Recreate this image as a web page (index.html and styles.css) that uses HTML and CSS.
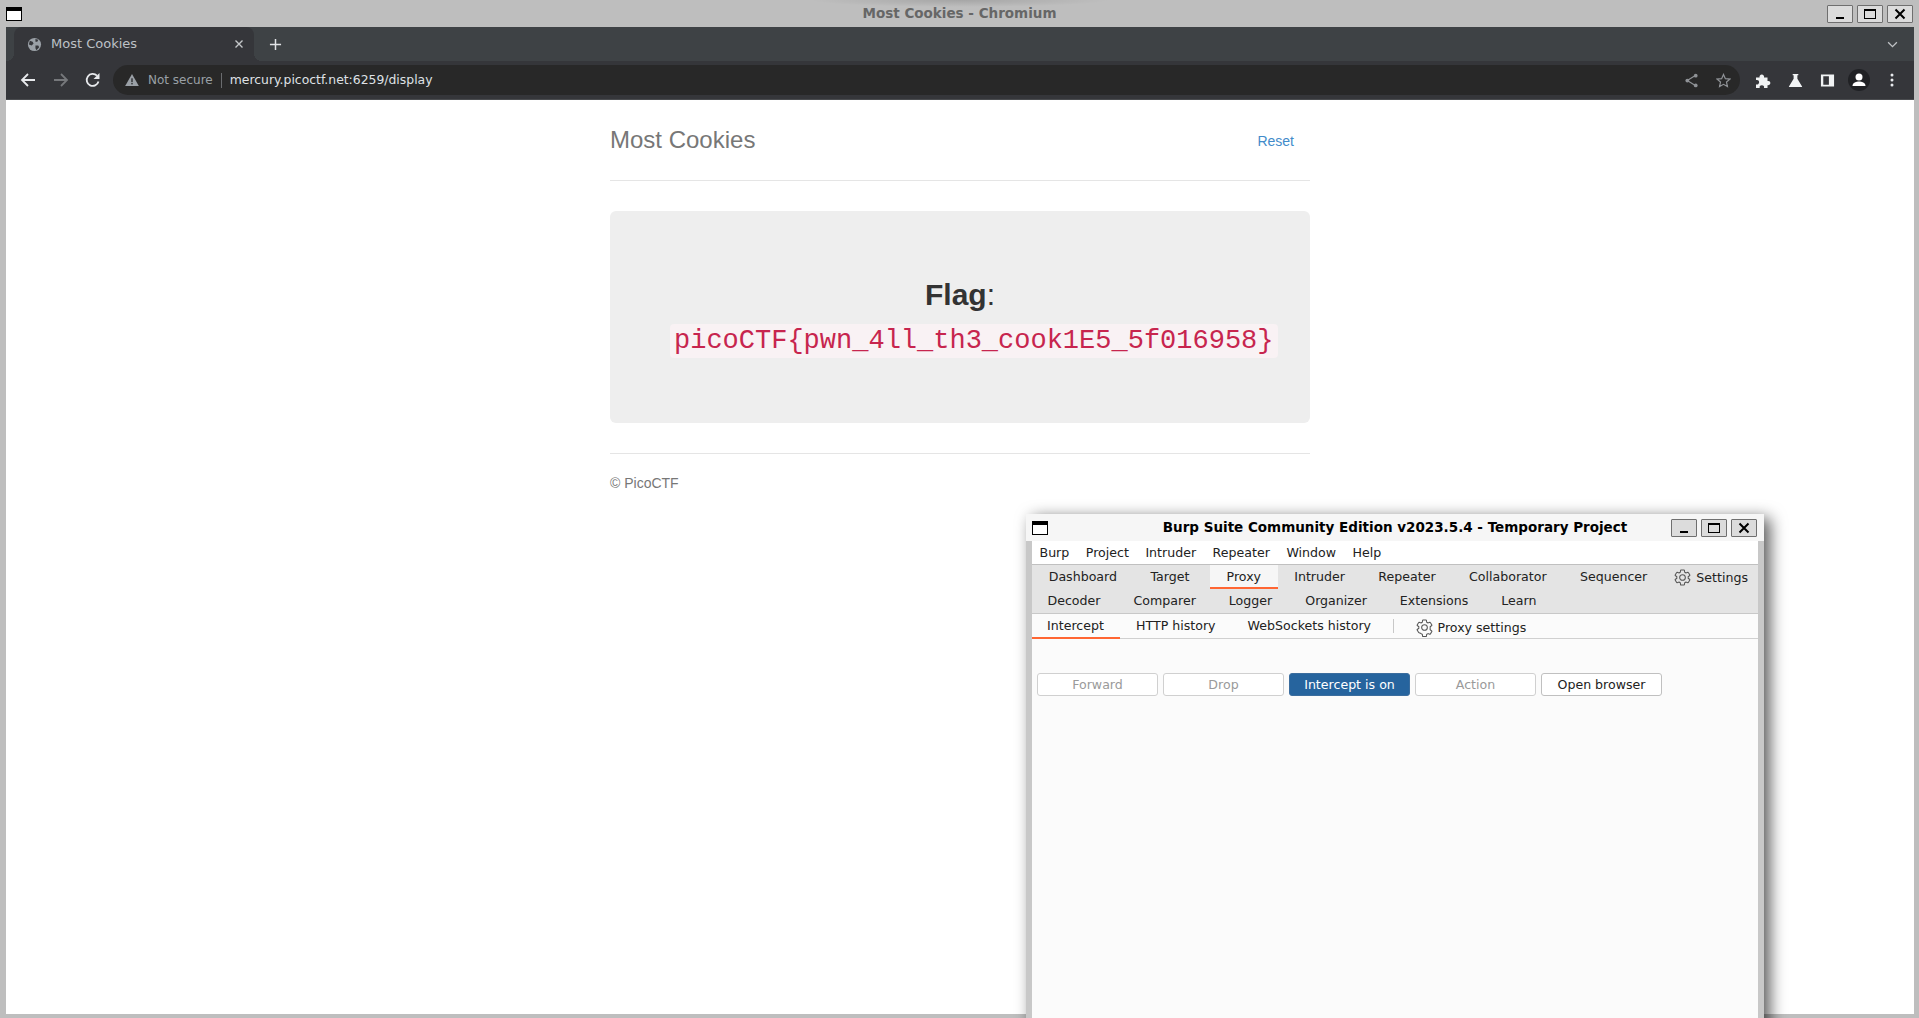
FILE: index.html
```html
<!DOCTYPE html>
<html lang="en">
<head>
<meta charset="utf-8">
<title>Most Cookies - Chromium</title>
<link rel="stylesheet" href="styles.css">
</head>
<body>
<div class="desktop">
  <header class="titlebar">
    <svg class="win-icon" viewBox="0 0 16 14"><rect x="0.5" y="0.5" width="15" height="13" fill="#fff" stroke="#000"/><rect x="0" y="0" width="16" height="4" fill="#000"/></svg>
    <div class="title-text">Most Cookies - Chromium</div>
    <div class="win-btns">
      <button class="wbtn"><svg viewBox="0 0 24 16"><rect x="8" y="11" width="8" height="2" fill="#000"/></svg></button>
      <button class="wbtn"><svg viewBox="0 0 24 16"><rect x="6.500" y="3.500" width="11" height="9" fill="none" stroke="#000"/><rect x="6" y="3" width="12" height="2" fill="#000"/></svg></button>
      <button class="wbtn"><svg viewBox="0 0 24 16"><path d="M7.500 3.500l9 9M16.500 3.500l-9 9" stroke="#000" stroke-width="2" fill="none"/></svg></button>
    </div>
  </header>
  <div class="browser">
    <div class="tabstrip">
      <div class="tab">
        <svg class="globe" viewBox="0 0 16 16"><circle cx="8" cy="8" r="7" fill="#9aa0a6"/><path d="M3 4l3 1 1 2-2 2-3-1zM9 2l3 1-1 2-2 0zM9 9l3 0 1 2-3 3-1-2z" fill="#35363a"/></svg>
        <span class="tab-label">Most Cookies</span>
        <svg class="tab-close" viewBox="0 0 10 10"><path d="M1.500 1.500l7 7M8.500 1.500l-7 7" stroke="#c4c7c9" stroke-width="1.400" fill="none"/></svg>
      </div>
      <svg class="newtab" viewBox="0 0 14 14"><path d="M7 1v12M1 7h12" stroke="#e1e3e6" stroke-width="1.600" fill="none"/></svg>
      <svg class="tab-chevron" viewBox="0 0 12 8"><path d="M1 1.500l5 5 5-5" stroke="#bfc2c5" stroke-width="1.500" fill="none"/></svg>
    </div>
    <div class="toolbar">
      <svg class="nav-ic back" viewBox="0 0 16 16"><path d="M15 8H2M8 2L2 8l6 6" stroke="#e8eaed" stroke-width="1.800" fill="none"/></svg>
      <svg class="nav-ic" viewBox="0 0 16 16"><path d="M1 8h13M8 2l6 6-6 6" stroke="#76787b" stroke-width="1.800" fill="none"/></svg>
      <svg class="nav-ic" viewBox="0 0 16 16"><path d="M13.500 9.500A6 6 0 1 1 12 3.700" stroke="#e8eaed" stroke-width="1.800" fill="none"/><path d="M14.500 1v6h-6z" fill="#e8eaed"/></svg>
      <div class="omnibox">
        <svg class="warn" viewBox="0 0 16 14"><path d="M8 0l8 14H0z" fill="#9aa0a6"/><rect x="7.200" y="5" width="1.600" height="4.500" fill="#292a2d"/><rect x="7.200" y="10.500" width="1.600" height="1.600" fill="#292a2d"/></svg>
        <span class="not-secure">Not secure</span>
        <span class="url">mercury.picoctf.net:6259/display</span>
        <span class="omni-spacer"></span>
        <svg class="omni-ic" viewBox="0 0 16 16"><path d="M12.500 2.500L3.500 8l9 5.500" stroke="#8f9296" stroke-width="1.300" fill="none"/><circle cx="12.500" cy="2.800" r="2" fill="#8f9296"/><circle cx="3.500" cy="8" r="2" fill="#8f9296"/><circle cx="12.500" cy="13.200" r="2" fill="#8f9296"/></svg>
        <svg class="omni-ic" viewBox="0 0 16 16"><path d="M8 1.500l2 4.500 4.800.5-3.600 3.200 1 4.800L8 12.100l-4.200 2.400 1-4.800L1.200 6.500 6 6z" stroke="#8f9296" stroke-width="1.300" fill="none"/></svg>
      </div>
      <svg class="tool-ic first" viewBox="0 0 15 15"><path d="M0 4.500h3.600a2.300 2.300 0 1 1 4.400 0h3.500V8a2.200 2.200 0 1 1 0 4.200V15H8a2.200 2.200 0 1 0-4.300 0H0v-3.600a2.300 2.300 0 1 0 0-4.300z" fill="#f1f3f4"/></svg>
      <svg class="tool-ic" viewBox="0 0 16 16"><path d="M5 1h6v1.500h-1V6l5 8.500V15H1v-.5L6 6V2.500H5z" fill="#f1f3f4"/></svg>
      <svg class="tool-ic" viewBox="0 0 16 16"><path fill-rule="evenodd" d="M1 1.500h14v13H1zM3.500 3.500v9h6v-9z" fill="#f1f3f4"/></svg>
      <div class="avatar"><svg viewBox="0 0 22 22"><circle cx="11" cy="8" r="3.500" fill="#fff"/><path d="M4.500 17c0-3.500 4-4.500 6.500-4.500s6.500 1 6.500 4.500z" fill="#fff"/></svg></div>
      <svg class="kebab" viewBox="0 0 4 14"><circle cx="2" cy="2" r="1.500" fill="#e8eaed"/><circle cx="2" cy="7" r="1.500" fill="#e8eaed"/><circle cx="2" cy="12" r="1.500" fill="#e8eaed"/></svg>
    </div>
    <main class="page">
      <div class="container">
        <div class="site-header">
          <h3 class="site-title">Most Cookies</h3>
          <a class="reset" href="#">Reset</a>
        </div>
        <div class="jumbotron">
          <p class="lead"><b>Flag</b>: <code class="flag">picoCTF{pwn_4ll_th3_cook1E5_5f016958}</code></p>
        </div>
        <footer class="site-footer">© PicoCTF</footer>
      </div>
    </main>
  </div>

  <section class="burp">
    <div class="burp-title">
      <svg class="win-icon burp-icon" viewBox="0 0 16 14"><rect x="0.5" y="0.5" width="15" height="13" fill="#fff" stroke="#000"/><rect x="0" y="0" width="16" height="4" fill="#000"/></svg>
      <div class="burp-title-text">Burp Suite Community Edition v2023.5.4 - Temporary Project</div>
      <div class="win-btns burp-btns">
        <button class="wbtn"><svg viewBox="0 0 24 16"><rect x="8" y="11" width="8" height="2" fill="#000"/></svg></button>
        <button class="wbtn"><svg viewBox="0 0 24 16"><rect x="6.500" y="3.500" width="11" height="9" fill="none" stroke="#000"/><rect x="6" y="3" width="12" height="2" fill="#000"/></svg></button>
        <button class="wbtn"><svg viewBox="0 0 24 16"><path d="M7.500 3.500l9 9M16.500 3.500l-9 9" stroke="#000" stroke-width="2" fill="none"/></svg></button>
      </div>
    </div>
    <div class="burp-body">
      <nav class="menubar">
        <span>Burp</span><span>Project</span><span>Intruder</span><span>Repeater</span><span>Window</span><span>Help</span>
      </nav>
      <div class="main-tabs">
        <div class="tab-row">
          <span class="mtab">Dashboard</span><span class="mtab">Target</span><span class="mtab active">Proxy</span><span class="mtab">Intruder</span><span class="mtab">Repeater</span><span class="mtab">Collaborator</span><span class="mtab">Sequencer</span>
          <span class="settings">
            <svg class="gear" viewBox="0 0 24 24"><path d="M19.140 12.940c.04-.3.06-.61.06-.94 0-.32-.02-.64-.07-.94l2.030-1.580c.18-.14.23-.41.12-.61l-1.920-3.320c-.12-.22-.37-.29-.59-.22l-2.390.96c-.5-.38-1.030-.7-1.620-.94l-.36-2.540c-.04-.24-.24-.41-.48-.41h-3.840c-.24 0-.43.17-.47.41l-.36 2.540c-.59.24-1.130.57-1.620.94l-2.390-.96c-.22-.08-.47 0-.59.22L2.740 8.870c-.12.21-.08.47.12.61l2.030 1.580c-.05.3-.09.63-.09.94s.02.64.07.94l-2.030 1.580c-.18.14-.23.41-.12.61l1.920 3.320c.12.22.37.29.59.22l2.390-.96c.5.38 1.030.7 1.620.94l.36 2.540c.05.24.24.41.48.41h3.840c.24 0 .44-.17.47-.41l.36-2.540c.59-.24 1.130-.56 1.620-.94l2.390.96c.22.08.47 0 .59-.22l1.920-3.320c.12-.22.07-.47-.12-.61l-2.010-1.580z" fill="none" stroke="#555" stroke-width="1.300"/><circle cx="12" cy="12" r="3.600" fill="none" stroke="#555" stroke-width="1.300"/></svg>
            Settings
          </span>
        </div>
        <div class="tab-row second">
          <span class="mtab">Decoder</span><span class="mtab">Comparer</span><span class="mtab">Logger</span><span class="mtab">Organizer</span><span class="mtab">Extensions</span><span class="mtab">Learn</span>
        </div>
      </div>
      <div class="sub-tabs">
        <span class="stab active">Intercept</span><span class="stab">HTTP history</span><span class="stab">WebSockets history</span>
        <span class="sub-sep"></span>
        <span class="proxy-settings">
          <svg class="gear" viewBox="0 0 24 24"><path d="M19.140 12.940c.04-.3.06-.61.06-.94 0-.32-.02-.64-.07-.94l2.030-1.580c.18-.14.23-.41.12-.61l-1.920-3.320c-.12-.22-.37-.29-.59-.22l-2.390.96c-.5-.38-1.030-.7-1.620-.94l-.36-2.540c-.04-.24-.24-.41-.48-.41h-3.840c-.24 0-.43.17-.47.41l-.36 2.540c-.59.24-1.130.57-1.620.94l-2.390-.96c-.22-.08-.47 0-.59.22L2.740 8.870c-.12.21-.08.47.12.61l2.030 1.580c-.05.3-.09.63-.09.94s.02.64.07.94l-2.030 1.580c-.18.14-.23.41-.12.61l1.920 3.320c.12.22.37.29.59.22l2.390.96c.5.38 1.030.7 1.620.94l.36 2.540c.05.24.24.41.48.41h3.840c.24 0 .44-.17.47-.41l.36-2.540c.59-.24 1.130-.56 1.620-.94l2.390.96c.22.08.47 0 .59-.22l1.920-3.320c.12-.22.07-.47-.12-.61l-2.010-1.580z" fill="none" stroke="#555" stroke-width="1.300"/><circle cx="12" cy="12" r="3.600" fill="none" stroke="#555" stroke-width="1.300"/></svg>
          Proxy settings
        </span>
      </div>
      <div class="panel">
        <div class="actions">
          <button class="bbtn disabled">Forward</button>
          <button class="bbtn disabled">Drop</button>
          <button class="bbtn primary">Intercept is on</button>
          <button class="bbtn disabled">Action</button>
          <button class="bbtn">Open browser</button>
        </div>
      </div>
    </div>
  </section>
</div>
</body>
</html>
```
FILE: styles.css
```css
* { box-sizing: border-box; }
html, body { margin: 0; height: 100%; overflow: hidden; }
body { font-family: "DejaVu Sans", sans-serif; }
.desktop { position: relative; width: 1919px; height: 1018px; background: #bebebe; padding: 0 5px 4px 6px; display: flex; flex-direction: column; overflow: hidden; }

.titlebar { height: 27px; margin: 0 -5px 0 -6px; padding: 0 6px; display: flex; align-items: center; position: relative; flex: none; background: radial-gradient(ellipse 150px 7px at 960px 0, rgba(0,0,0,.13), transparent); }
.win-icon { width: 16px; height: 14px; display: block; flex: none; }
.title-text { position: absolute; left: 0; right: 0; text-align: center; font-weight: bold; font-size: 13.500px; color: #666; padding-bottom: 2px; }
.win-btns { margin-left: auto; display: flex; gap: 4px; position: relative; }
.wbtn { width: 26px; height: 18px; padding: 0; border: 1px solid #6f6f6f; border-radius: 1px; background: #dcdcdc; display: block; }
.wbtn svg { display: block; width: 24px; height: 16px; }

.browser { flex: 1; display: flex; flex-direction: column; min-height: 0; }
.tabstrip { height: 34px; flex: none; background: #3e4245; display: flex; align-items: center; padding-left: 8px; }
.tab { position: relative; width: 240px; height: 34px; background: #35363a; border-radius: 8px 8px 0 0; display: flex; align-items: center; padding: 0 10px 0 13px; color: #bdc1c6; font-size: 13px; }
.tab::before, .tab::after { content: ""; position: absolute; bottom: 0; width: 8px; height: 8px; }
.tab::before { right: 100%; background: radial-gradient(circle at 0 0, transparent 8px, #35363a 8px); }
.tab::after { left: 100%; background: radial-gradient(circle at 100% 0, transparent 8px, #35363a 8px); }
.globe { width: 15px; height: 15px; margin-right: 9px; }
.tab-label { flex: 1; margin-bottom: 2px; }
.tab-close { width: 10px; height: 10px; }
.newtab { width: 13px; height: 13px; margin-left: 15px; }
.tab-chevron { width: 11px; height: 7px; margin-left: auto; margin-right: 16px; }

.toolbar { height: 39px; flex: none; background: #35363a; border-bottom: 1px solid #4a4c4f; display: flex; align-items: center; padding-left: 15px; }
.nav-ic { width: 16px; height: 16px; margin-right: 16px; flex: none; }
.nav-ic.back { margin-left: -1px; margin-right: 17px; }
.omnibox { width: 1627px; height: 30px; margin-left: -4px; border-radius: 15px; background: #282828; display: flex; align-items: center; padding: 0 9px 0 12px; font-size: 12px; flex: none; }
.warn { width: 14px; height: 12px; margin-right: 9px; }
.not-secure { color: #9aa0a6; padding-right: 8px; border-right: 1px solid #6a6c6f; line-height: 15px; margin-right: 8px; }
.url { color: #dfe1e5; font-size: 12.400px; margin-bottom: 2px; }
.omni-spacer { flex: 1; }
.omni-ic { width: 15px; height: 15px; margin-left: 17px; }
.tool-ic { width: 15px; height: 15px; margin-right: 17px; flex: none; }
.tool-ic.first { margin-left: 16px; }
.avatar { width: 22px; height: 22px; border-radius: 50%; background: #202124; margin-right: 20px; margin-left: -4px; flex: none; }
.avatar svg { display: block; width: 22px; height: 22px; }
.kebab { width: 4px; height: 14px; flex: none; }

.page { flex: 1; background: #fff; font-family: "Liberation Sans", Arial, sans-serif; color: #333; min-height: 0; }
.container { width: 700px; margin: 0 auto; padding-top: 27px; }
.site-header { display: flex; justify-content: space-between; border-bottom: 1px solid #e5e5e5; height: 54px; }
.site-title { margin: 0; font-size: 24px; font-weight: 500; color: #777; line-height: 26px; }
.reset { color: #428bca; text-decoration: none; font-size: 14px; margin: 4px 16px 0 0; line-height: 20px; }
.jumbotron { margin-top: 30px; height: 212px; padding: 61px 60px; background: #eee; border-radius: 6px; text-align: center; }
.lead { margin: 0; font-size: 30px; line-height: 45px; }
.flag { font-family: "Liberation Mono", monospace; font-size: 27px; color: #c7254e; background: #f9f2f4; border-radius: 4px; padding: 2px 4px; white-space: nowrap; vertical-align: 2px; }
.site-footer { margin-top: 30px; border-top: 1px solid #e5e5e5; padding-top: 19px; font-size: 14px; line-height: 20px; color: #777; }

.burp { position: absolute; left: 1026px; top: 514px; width: 738px; height: 520px; background: #c8c8c8; box-shadow: 6px 4px 16px rgba(0,0,0,.65); font-size: 12.600px; color: #222; border-radius: 2px 2px 0 0; }
.burp-title { height: 27px; background: #f6f6f6; display: flex; align-items: center; padding: 0 7px 0 6px; position: relative; }
.burp-title-text { position: absolute; left: 0; right: 0; text-align: center; font-weight: bold; font-size: 13.500px; color: #000; padding-bottom: 2px; }
.burp-btns { margin-left: auto; }
.burp-body { margin: 0 6px; background: #fbfbfb; height: 493px; }
.menubar { height: 24px; background: #fff; border-bottom: 1px solid #c0c0c0; display: flex; align-items: center; padding-left: 7.500px; }
.menubar span { margin-right: 16.500px; }
.main-tabs { background: #e4e4e4; height: 49px; border-bottom: 1px solid #c8c8c8; }
.tab-row { height: 24px; display: flex; align-items: stretch; position: relative; }
.mtab { padding: 1px 16.700px 0; display: flex; align-items: center; border-bottom: 2px solid transparent; }
.mtab.active { background: #f6f6f6; border-bottom-color: #ff6633; margin-left: 4px; padding: 1px 16.500px 0; }
.second { margin-left: -1px; }
.second .mtab { padding: 1px 16.500px 0; }
.settings { position: absolute; right: 10px; top: 0; height: 24px; display: flex; align-items: center; gap: 4px; }
.gear { width: 19px; height: 19px; display: block; }
.sub-tabs { height: 25px; background: #fbfbfb; border-bottom: 1px solid #d0d0d0; display: flex; align-items: stretch; }
.stab { padding: 0 15px; display: flex; align-items: center; border-bottom: 2px solid transparent; margin-bottom: -1px; }
.stab.active { border-bottom-color: #ff6633; width: 88px; }
.stab + .stab { padding: 0 16px; }
.sub-sep { width: 1px; height: 14px; background: #c8c8c8; align-self: center; margin: 0 20.500px 0 6px; }
.proxy-settings { display: flex; align-items: center; gap: 4px; padding-top: 2px; }
.panel { padding: 34px 0 0 5px; }
.actions { display: flex; gap: 5px; }
.bbtn { width: 121px; height: 23px; padding: 0; border: 1px solid #c0c0c0; border-radius: 3px; background: #fff; font: 12.600px "DejaVu Sans", sans-serif; color: #222; }
.bbtn.disabled { color: #9a9a9a; border-color: #d0d0d0; }
.bbtn.primary { background: #26649e; color: #fff; border-color: #3b6d9e; }
```
